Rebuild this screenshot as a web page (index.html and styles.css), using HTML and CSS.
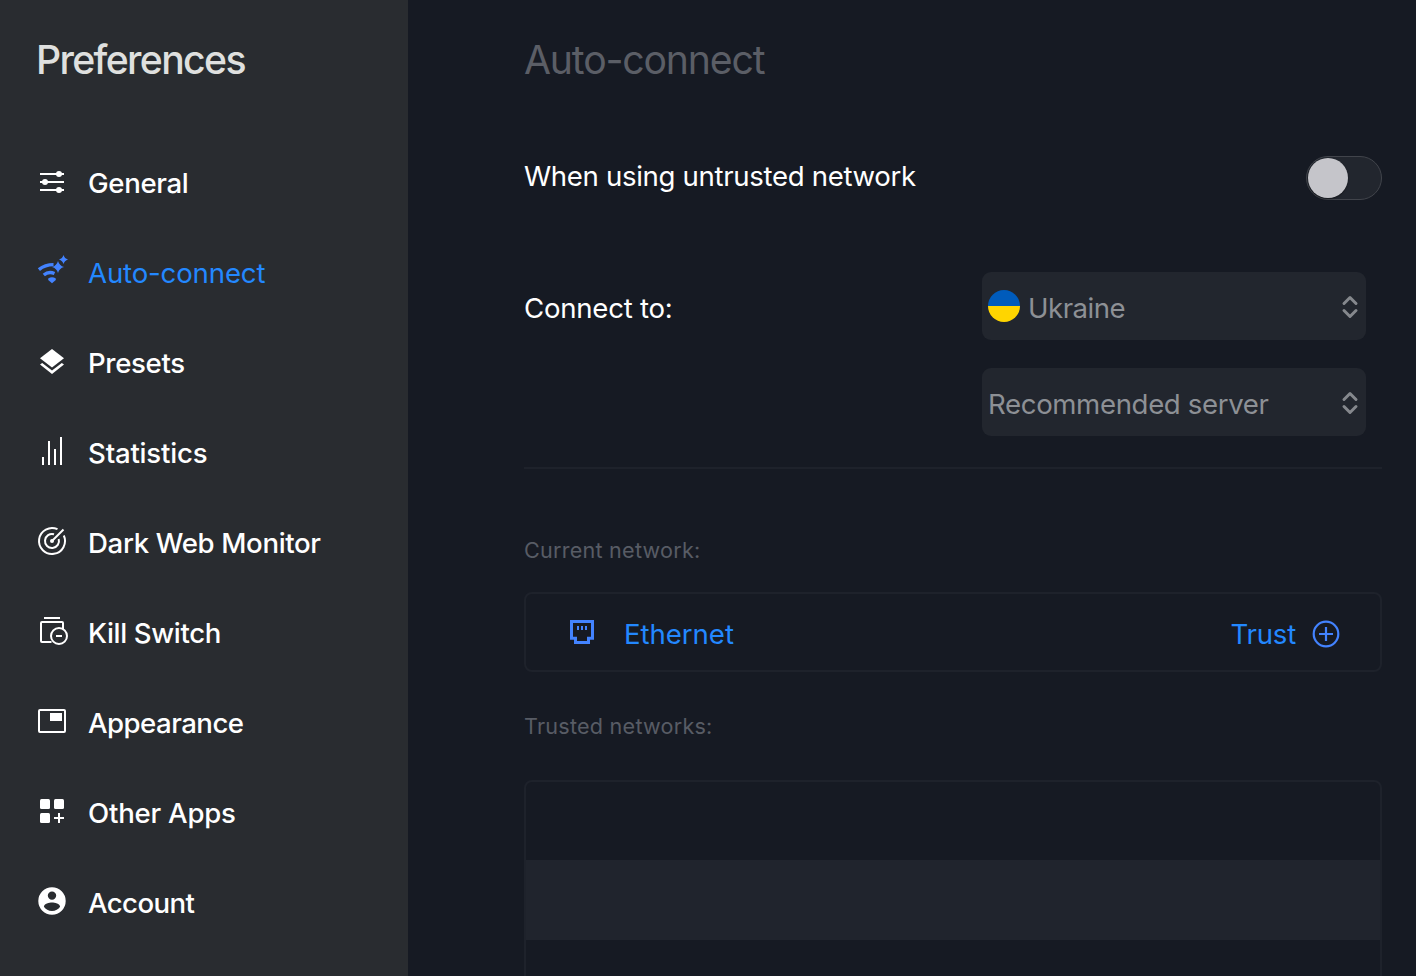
FILE: index.html
```html
<!DOCTYPE html>
<html lang="en">
<head>
<meta charset="utf-8">
<title>Preferences</title>
<link rel="stylesheet" href="styles.css">
</head>
<body>
<div class="window">
  <aside class="sidebar">
    <h1 class="title sidebar-title">Preferences</h1>
    <nav class="nav">
      <a class="nav-item"><svg class="icon" viewBox="0 0 32 32"><path d="M4 8H28M4 16H28M4 24H28" stroke="currentColor" stroke-width="2"/><circle cx="23" cy="8" r="3"/><circle cx="9" cy="16" r="3"/><circle cx="23" cy="24" r="3"/></svg><span class="t-general">General</span></a>
      <a class="nav-item active"><svg class="icon" viewBox="0 0 32 32"><path d="M2.900 13.600Q9 8.600 17.500 8.600M7.800 19Q12.500 15 18.500 17.500" fill="none" stroke="currentColor" stroke-width="3.400"/><path d="M12.200 22.500Q16 20 19.800 22.500V24L16 27.200L12.200 24Z"/><path d="M22 5Q23.300 9.700 28 11Q23.300 12.300 22 17Q20.700 12.300 16 11Q20.700 9.700 22 5ZM27.500-1Q28.500 2.500 32 3.500Q28.500 4.500 27.500 8Q26.500 4.500 23 3.500Q26.500 2.500 27.500-1Z"/></svg><span class="t-auto">Auto-connect</span></a>
      <a class="nav-item"><svg class="icon" viewBox="0 0 32 32"><path d="M16 3L28 12.300L16 21.600L4 12.300Z"/><path d="M4 18.600L6.200 17L16 24.600L25.800 17L28 18.600L16 28Z"/></svg><span class="t-presets">Presets</span></a>
      <a class="nav-item"><svg class="icon" viewBox="0 0 32 32"><path d="M6 21h2v8H6zM12 5h2v24h-2zM18 13h2v16h-2zM24 1h2v28h-2z"/></svg><span class="t-stats">Statistics</span></a>
      <a class="nav-item"><svg class="icon" viewBox="0 0 32 32"><g fill="none" stroke="currentColor" stroke-width="2"><path d="M21.500 3.200A13 13 0 1 0 27.800 9.500"/><path d="M18 8.300A7 7 0 1 0 22.700 13"/><path d="M16 15L27.500 3.500"/></g><circle cx="16" cy="15" r="2"/></svg><span class="t-dark">Dark Web Monitor</span></a>
      <a class="nav-item"><svg class="icon" viewBox="0 0 32 32"><g fill="none" stroke="currentColor" stroke-width="2"><path d="M8 2H24M15.500 26H6Q5 26 5 25V7Q5 6 6 6H26Q27 6 27 7V13M20 20H26"/><circle cx="23" cy="20" r="8"/></g></svg><span class="t-kill">Kill Switch</span></a>
      <a class="nav-item"><svg class="icon" viewBox="0 0 32 32"><rect x="3" y="4" width="26" height="22" rx="1" fill="none" stroke="currentColor" stroke-width="2"/><path d="M14 7h12v8H14z"/></svg><span class="t-appear">Appearance</span></a>
      <a class="nav-item"><svg class="icon" viewBox="0 0 32 32"><rect x="4" y="3" width="10" height="10" rx="1.500"/><rect x="18" y="3" width="10" height="10" rx="1.500"/><rect x="4" y="17" width="10" height="10" rx="1.500"/><path d="M22 17h2v4h4v2h-4v4h-2v-4h-4v-2h4z"/></svg><span class="t-other">Other Apps</span></a>
      <a class="nav-item"><svg class="icon" viewBox="0 0 32 32"><path fill-rule="evenodd" d="M16 1.300A13.700 13.700 0 1 0 16 28.700A13.700 13.700 0 1 0 16 1.300ZM16 5.400A4.200 4.200 0 1 1 16 13.800A4.200 4.200 0 1 1 16 5.400ZM16 25C12.500 25 9.600 23.300 7.900 20.700C8 18 13.300 16.600 16 16.600S24 18 24.100 20.700C22.400 23.300 19.500 25 16 25Z"/></svg><span class="t-account">Account</span></a>
    </nav>
  </aside>
  <main class="content">
    <h2 class="title content-title">Auto-connect</h2>
    <div class="row toggle-row"><span class="t-when">When using untrusted network</span><span class="toggle"><span class="knob"></span></span></div>
    <div class="connect">
      <span class="connect-label">Connect to:</span>
      <div class="selects">
        <div class="select"><svg class="flag" viewBox="0 0 32 32"><path d="M0 16A16 16 0 0 1 32 16Z" fill="#005bbb"/><path d="M0 16A16 16 0 0 0 32 16Z" fill="#ffd500"/></svg><span class="select-text t-ukraine">Ukraine</span><svg class="chevrons" viewBox="0 0 16 24"><path d="M2 8.500L8 2.500L14 8.500M2 15.500L8 21.500L14 15.500"/></svg></div>
        <div class="select"><span class="select-text t-rec">Recommended server</span><svg class="chevrons" viewBox="0 0 16 24"><path d="M2 8.500L8 2.500L14 8.500M2 15.500L8 21.500L14 15.500"/></svg></div>
      </div>
    </div>
    <h3 class="section section-current">Current network:</h3>
    <div class="network">
      <svg class="port" viewBox="0 0 24 24"><path d="M1.500 1.500H22.500V18.200H18.500V22.500H5.500V18.200H1.500Z" fill="none" stroke="currentColor" stroke-width="3"/><path d="M7 6h2v4H7zM11 6h2v4h-2zM15 6h2v4h-2z"/></svg>
      <span class="t-eth">Ethernet</span>
      <span class="trust"><span class="t-trust">Trust</span><svg class="plus" viewBox="0 0 28 28"><circle cx="14" cy="14" r="12.300"/><path d="M14 7V21M7 14H21"/></svg></span>
    </div>
    <h3 class="section section-trusted">Trusted networks:</h3>
    <div class="list"><div class="list-row"></div><div class="list-row"></div><div class="list-row"></div></div>
  </main>
</div>
</body>
</html>
```
FILE: styles.css
```css
* { box-sizing: border-box; }
body { margin: 0; font: 400 27.600px/36px Inter, "Liberation Sans", sans-serif; letter-spacing: -0.200px; color: #fff; background: #161a23; }
.window { display: flex; width: 1416px; height: 976px; overflow: hidden; white-space: nowrap; }
svg { display: block; flex: none; fill: currentColor; overflow: visible; }
.sidebar { width: 408px; flex: none; padding: 36px 36px 0; background: #292c30; }
.title { margin: 0; font-size: 39.200px; font-weight: 400; line-height: 48px; }
.sidebar-title { color: #dfe0df; font-weight: 500; letter-spacing: -1.660px; }
.nav { display: flex; flex-direction: column; padding-top: 53px; }
.nav-item { display: flex; align-items: center; gap: 20px; height: 90px; font-weight: 500; }
.nav-item span { padding-top: 1px; letter-spacing: -0.350px; }
.nav-item .t-stats { letter-spacing: -0.200px; }
.nav-item .t-other { letter-spacing: -0.220px; }
.nav-item .t-appear { letter-spacing: -0.530px; }
.nav-item .t-account { letter-spacing: -0.600px; }
.icon { width: 32px; height: 32px; }
.active { color: #2388ff; }
.nav-item.active { font-weight: 400; }
.nav-item .t-auto { letter-spacing: -0.150px; }
.active .icon { color: #4383ff; }
.content { flex: 1; padding: 36px 34px 0 116px; }
.content-title { color: #5b5e66; letter-spacing: -1.170px; }
.row { display: flex; justify-content: space-between; align-items: center; }
.toggle-row { height: 44px; margin-top: 72px; }
.t-when { padding-bottom: 4px; letter-spacing: -0.330px; }
.toggle { width: 76px; height: 44px; border: 1.500px solid #41444b; border-radius: 22px; background: #22262e; padding: 1px; }
.knob { display: block; width: 40px; height: 40px; border-radius: 50%; background: #c5c5ca; box-shadow: 0 1px 2px #0006; }
.connect { display: flex; justify-content: space-between; height: 197px; margin-top: 72px; padding-right: 16px; border-bottom: 2px solid #1e222b; }
.connect-label { padding-top: 18px; letter-spacing: -0.240px; }
.selects { display: flex; flex-direction: column; gap: 28px; }
.select { display: flex; align-items: center; width: 384px; height: 68px; padding: 0 8px 0 6px; border-radius: 9px; background: #22262e; color: #8d9095; }
.select-text { padding-top: 3px; }
.t-ukraine { letter-spacing: -0.500px; }
.t-rec { letter-spacing: -0.360px; }
.flag { width: 32px; height: 32px; margin-right: 8px; }
.chevrons { width: 16px; height: 24px; margin-left: auto; margin-top: 2px; fill: none; stroke: #85888d; stroke-width: 3; stroke-linecap: round; stroke-linejoin: round; }
.section { margin: 0; font-size: 21.600px; font-weight: 400; line-height: 30px; color: #585c65; letter-spacing: 0.230px; }
.section-current { padding-top: 66px; }
.network { display: flex; align-items: center; height: 80px; margin-top: 27px; padding: 0 40px 0 44px; border: 2px solid #1e222b; border-radius: 8px; color: #2388ff; }
.t-eth { padding-top: 4px; letter-spacing: -0.050px; }
.port { width: 24px; height: 24px; margin-right: 30px; color: #4383ff; }
.trust { display: flex; align-items: center; gap: 16px; margin-left: auto; padding-top: 4px; }
.plus { width: 28px; height: 28px; fill: none; stroke: #4383ff; stroke-width: 2.200; }
.section-trusted { padding-top: 39px; }
.list { height: 300px; margin-top: 39px; border: 2px solid #1e222b; border-radius: 8px; }
.list-row { height: 80px; }
.list-row:first-child { height: 78px; }
.list-row:nth-child(even) { background: #20242d; }
```
